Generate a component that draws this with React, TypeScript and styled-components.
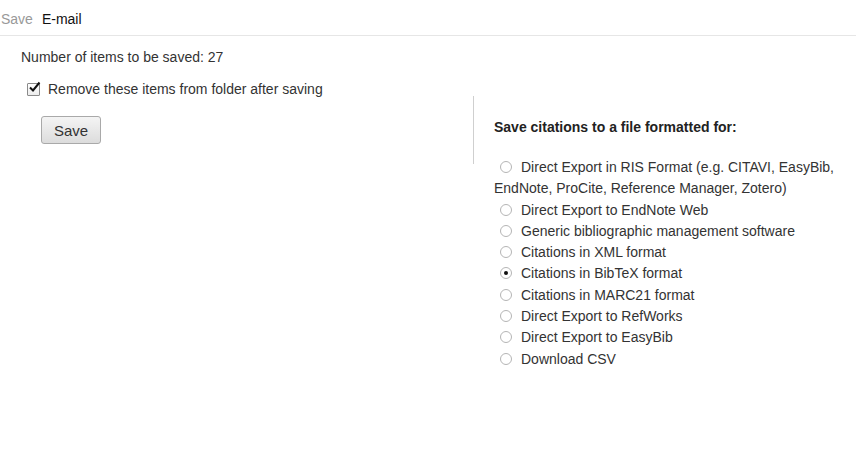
import React from "react";
import styled, { createGlobalStyle } from "styled-components";

const GlobalStyle = createGlobalStyle`
  html, body { margin: 0; padding: 0; background: #fff; }
  body {
    font-family: "Liberation Sans", Arial, Helvetica, sans-serif;
    font-size: 14px;
    color: #333;
  }
`;

const Page = styled.div`
  width: 856px;
  height: 460px;
  overflow: hidden;
`;

const TabBar = styled.div`
  display: flex;
  align-items: center;
  gap: 9px;
  height: 36px;
  padding-left: 1px;
  border-bottom: 1px solid #e6e6e6;
  padding-top: 2px;
  box-sizing: border-box;
`;

const Tab = styled.span<{ $active?: boolean }>`
  font-size: 14px;
  line-height: 16px;
  color: ${(p) => (p.$active ? "#111" : "#999")};
`;

const Content = styled.div`
  display: flex;
  align-items: flex-start;
`;

const LeftCol = styled.div`
  width: 452px;
  padding: 11px 0 0 21px;
  display: flex;
  flex-direction: column;
`;

const Line = styled.div`
  line-height: 20px;
`;

const CheckRow = styled.label`
  display: flex;
  align-items: center;
  margin-top: 12px;
  padding-left: 6px;
  line-height: 20px;
  gap: 8px;
`;

const CheckBox = styled.span`
  position: relative;
  width: 11px;
  height: 11px;
  border: 1px solid #8a8a8a;
  border-radius: 1px;
  background: linear-gradient(#fff, #ececec);
  flex: none;
  svg {
    position: absolute;
    left: 0px;
    top: -3px;
  }
`;

const SaveButton = styled.button`
  margin-top: 17px;
  margin-left: 20px;
  width: 60px;
  height: 28px;
  font-family: "Liberation Sans", Arial, sans-serif;
  font-size: 15px;
  color: #333;
  border: 1px solid #a9a9a9;
  border-radius: 3px;
  background: linear-gradient(#f4f4f4, #dcdcdc);
  padding: 0;
  cursor: pointer;
`;

const Divider = styled.div`
  width: 1px;
  height: 68px;
  margin-top: 60px;
  background: #cfcfcf;
  flex: none;
`;

const RightCol = styled.div`
  padding: 81px 10px 0 20px;
  flex: 1;
`;

const Heading = styled.div`
  font-weight: bold;
  font-size: 14px;
  line-height: 20px;
  color: #222;
  margin-bottom: 20px;
`;

const Option = styled.label`
  display: block;
  line-height: 21.3px;
  color: #333;
`;

const Radio = styled.span<{ $checked?: boolean }>`
  display: inline-block;
  box-sizing: border-box;
  width: 12px;
  height: 12px;
  border: 1px solid #b5b5b5;
  border-radius: 50%;
  background: #fff;
  margin: 0 9px 0 6px;
  vertical-align: -1px;
  position: relative;
  &::after {
    content: "";
    display: ${(p) => (p.$checked ? "block" : "none")};
    position: absolute;
    left: 3px;
    top: 3px;
    width: 4px;
    height: 4px;
    border-radius: 50%;
    background: #111;
  }
`;

const options = [
  "Direct Export in RIS Format (e.g. CITAVI, EasyBib, EndNote, ProCite, Reference Manager, Zotero)",
  "Direct Export to EndNote Web",
  "Generic bibliographic management software",
  "Citations in XML format",
  "Citations in BibTeX format",
  "Citations in MARC21 format",
  "Direct Export to RefWorks",
  "Direct Export to EasyBib",
  "Download CSV",
];

export default function App() {
  return (
    <Page>
      <GlobalStyle />
      <TabBar>
        <Tab>Save</Tab>
        <Tab $active>E-mail</Tab>
      </TabBar>
      <Content>
        <LeftCol>
          <Line>Number of items to be saved: 27</Line>
          <CheckRow>
            <CheckBox>
              <svg width="13" height="13" viewBox="0 0 13 13">
                <path d="M2 6.5 L5 9.5 L11.5 1.5" fill="none" stroke="#111" strokeWidth="2" />
              </svg>
            </CheckBox>
            Remove these items from folder after saving
          </CheckRow>
          <div>
            <SaveButton>Save</SaveButton>
          </div>
        </LeftCol>
        <Divider />
        <RightCol>
          <Heading>Save citations to a file formatted for:</Heading>
          {options.map((o, i) => (
            <Option key={o}>
              <Radio $checked={i === 4} />
              {o}
            </Option>
          ))}
        </RightCol>
      </Content>
    </Page>
  );
}
